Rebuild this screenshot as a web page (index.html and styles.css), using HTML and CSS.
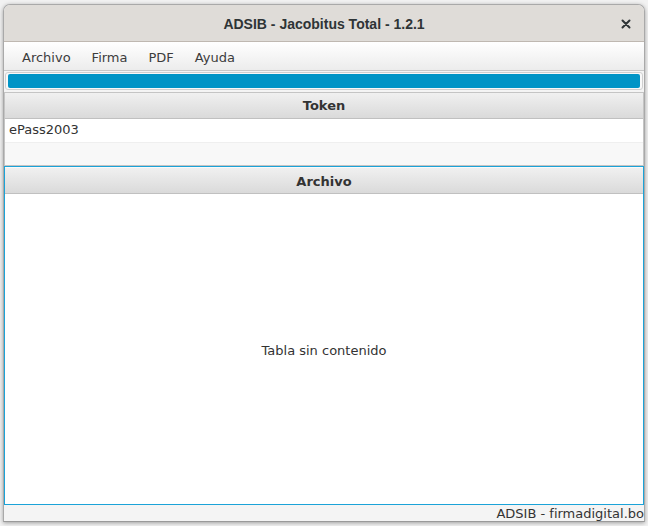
FILE: index.html
```html
<!DOCTYPE html>
<html lang="es">
<head>
    <meta charset="UTF-8">
    <title>ADSIB - Jacobitus Total - 1.2.1</title>
    <link rel="stylesheet" href="styles.css">
</head>
<body>
    <div class="window">
        <header class="titlebar">
            <span class="title">ADSIB - Jacobitus Total - 1.2.1</span>
            <button class="close-btn" type="button" aria-label="Cerrar">
                <svg width="10" height="10" viewBox="0 0 10 10">
                    <path d="M1.5 1.5 L8.5 8.5 M8.5 1.5 L1.5 8.5" stroke="#2e3436" stroke-width="2" stroke-linecap="round"/>
                </svg>
            </button>
        </header>

        <nav class="menubar">
            <span class="menu-item">Archivo</span>
            <span class="menu-item">Firma</span>
            <span class="menu-item">PDF</span>
            <span class="menu-item">Ayuda</span>
        </nav>

        <main class="content">
            <div class="progress">
                <div class="progress-bar"></div>
            </div>

            <section class="table token-table">
                <div class="table-header">Token</div>
                <div class="table-row">ePass2003</div>
                <div class="table-row odd"></div>
            </section>

            <section class="table file-table">
                <div class="table-header">Archivo</div>
                <div class="table-empty">Tabla sin contenido</div>
            </section>
        </main>

        <footer class="statusbar">ADSIB - firmadigital.bo</footer>
    </div>
</body>
</html>
```

FILE: styles.css
```css
:root {
    --title-bg: #dfdcd8;
    --window-bg: #f4f4f4;
    --text: #333333;
    --blue: #0094c6;
    --focus: #1ba3d8;
    --line: #c4c4c4;
}

* {
    margin: 0;
    padding: 0;
    box-sizing: border-box;
}

body {
    background-color: #f2f2f2;
    font-family: 'DejaVu Sans', sans-serif;
    color: var(--text);
    width: 648px;
    height: 526px;
    overflow: hidden;
}

.window {
    margin: 4px 3px 0;
    height: 518px;
    border: 1px solid #a9a9a9;
    border-bottom-color: #9a9a9a;
    border-radius: 7px 7px 0 0;
    box-shadow: 0 1px 4px rgba(0, 0, 0, 0.35);
    background-color: var(--window-bg);
    display: flex;
    flex-direction: column;
    overflow: hidden;
}

.titlebar {
    height: 37px;
    flex-shrink: 0;
    background-color: var(--title-bg);
    border-bottom: 1px solid #bfb8b1;
    display: flex;
    align-items: center;
    justify-content: center;
    position: relative;
}

.title {
    font-family: 'Liberation Sans', sans-serif;
    font-weight: bold;
    font-size: 14px;
    color: #2e3436;
    margin-top: 2px;
}

.close-btn {
    position: absolute;
    right: 13px;
    top: 14px;
    width: 10px;
    height: 10px;
    border: none;
    background: none;
    display: flex;
}

.menubar {
    height: 29px;
    flex-shrink: 0;
    background: linear-gradient(#ffffff, #ececec);
    border-bottom: 1px solid #c8c8c8;
    display: flex;
    align-items: center;
    padding: 2px 0 0 18px;
    gap: 21px;
    font-size: 13px;
    color: #3c3c3c;
}

.content {
    flex: 1;
    display: flex;
    flex-direction: column;
    padding-top: 1px;
}

.progress {
    margin: 0 1px;
    height: 18px;
    border: 1px solid #cfcfcf;
    border-radius: 3px;
    background-color: #f8f8f8;
    padding: 1px 2px;
}

.progress-bar {
    height: 100%;
    background-color: var(--blue);
    border-radius: 2px;
}

.table {
    border: 1px solid var(--line);
    background-color: #ffffff;
}

.token-table {
    margin-top: 2px;
}

.table-header {
    height: 26px;
    background: linear-gradient(#f0f0f0, #dadada);
    border-bottom: 1px solid #c0c0c0;
    display: flex;
    align-items: center;
    justify-content: center;
    font-weight: bold;
    font-size: 13px;
    color: #333333;
}

.table-row {
    height: 23px;
    padding: 0 0 2px 4px;
    display: flex;
    align-items: center;
    font-size: 13px;
    color: #333333;
    background-color: #ffffff;
}

.table-row.odd {
    height: 23px;
    background-color: #f8f8f8;
    border-top: 1px solid #efefef;
}

.file-table {
    flex: 1;
    border-color: var(--focus);
    display: flex;
    flex-direction: column;
}

.file-table .table-header {
    height: 27px;
    padding-top: 1px;
    border-top: 1px solid #fafafa;
}

.table-empty {
    flex: 1;
    display: flex;
    align-items: center;
    justify-content: center;
    padding-top: 2px;
    font-size: 13px;
    color: #333333;
}

.statusbar {
    height: 16px;
    flex-shrink: 0;
    background-color: var(--window-bg);
    font-size: 13px;
    line-height: 17px;
    text-align: right;
    color: #333333;
}
```
